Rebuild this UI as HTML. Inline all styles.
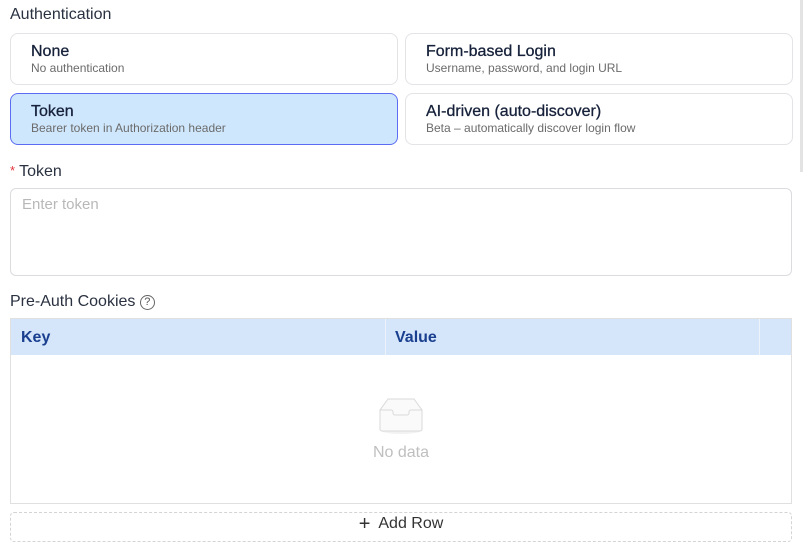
<!DOCTYPE html>
<html><head><style>
*{box-sizing:border-box;margin:0;padding:0}
body{width:803px;height:535px;overflow:hidden;background:#fff;font-family:"Liberation Sans",sans-serif;position:relative;color:#1f2937}
.abs{position:absolute}
.card{position:absolute;border:1px solid #e3e3e8;border-radius:8px;background:#fff;padding:8px 0 0 20px}
.card.sel{background:#cfe7fc;border-color:#5b6cf2}
.t{font-size:16px;color:#16213a;font-weight:500;line-height:20px;-webkit-text-stroke:0.3px #16213a}
.s{font-size:12px;color:#6b6b6b;line-height:15px;margin-top:-1px}
</style></head><body>
<div class="abs" style="left:10px;top:6px;font-size:16px;color:#2a3140">Authentication</div>
<div class="card" style="left:10px;top:33px;width:388px;height:52px"><div class="t">None</div><div class="s">No authentication</div></div>
<div class="card" style="left:405px;top:33px;width:388px;height:52px"><div class="t">Form-based Login</div><div class="s">Username, password, and login URL</div></div>
<div class="card sel" style="left:10px;top:93px;width:388px;height:52px"><div class="t">Token</div><div class="s">Bearer token in Authorization header</div></div>
<div class="card" style="left:405px;top:93px;width:388px;height:52px"><div class="t">AI-driven (auto-discover)</div><div class="s">Beta – automatically discover login flow</div></div>
<div class="abs" style="left:800px;top:0;width:3px;height:172px;background:#e3e3e3"></div>
<div class="abs" style="left:10px;top:163px;font-size:16px;color:#2a3140"><span style="color:#e0353a;font-size:13px;vertical-align:top;margin-right:4px">*</span>Token</div>
<div class="abs" style="left:10px;top:188px;width:782px;height:88px;border:1px solid #dcdce0;border-radius:6px;padding:7px 11px;font-size:15px;color:#b8b8b8">Enter token</div>
<div class="abs" style="left:10px;top:293px;font-size:16px;color:#2a3140">Pre-Auth Cookies <span style="display:inline-block;width:15px;height:15px;border:1px solid #666;border-radius:50%;font-size:11px;text-align:center;line-height:13px;color:#555;vertical-align:1px">?</span></div>
<div class="abs" style="left:10px;top:318px;width:782px;height:186px;border:1px solid #e0e0e0">
<div style="height:36px;background:#d5e6fb;position:relative;font-size:16px;font-weight:bold;color:#1a3f8f">
<span class="abs" style="left:10px;top:10px">Key</span>
<div class="abs" style="left:374px;top:0;width:1px;height:36px;background:#eef3fb"></div>
<span class="abs" style="left:384px;top:10px">Value</span>
<div class="abs" style="left:748px;top:0;width:1px;height:36px;background:#eef3fb"></div>
</div>
<svg class="abs" style="left:364px;top:76px" width="56" height="40" viewBox="0 0 56 40"><ellipse cx="26" cy="35" rx="21" ry="4" fill="#f2f2f2"/><path d="M5 15 L13 4 H39 L47 15 V34 a2 2 0 0 1-2 2 H7 a2 2 0 0 1-2-2Z" fill="#fafafa" stroke="#d9d9d9"/><path d="M5 15 H16 a2 2 0 0 1 2 2 v1 a2 2 0 0 0 2 2 H32 a2 2 0 0 0 2-2 v-1 a2 2 0 0 1 2-2 H47" fill="none" stroke="#d9d9d9"/></svg>
<div class="abs" style="left:0;width:780px;top:125px;text-align:center;font-size:16px;color:#bfbfbf">No data</div>
</div>
<div class="abs" style="left:10px;top:512px;width:782px;height:30px;border:1px dashed #d4d4d4;border-radius:4px;text-align:center;padding-top:0;font-size:16px;color:#333"><span style="font-size:20px;vertical-align:-2px">+</span>&nbsp; Add Row</div>
</body></html>
